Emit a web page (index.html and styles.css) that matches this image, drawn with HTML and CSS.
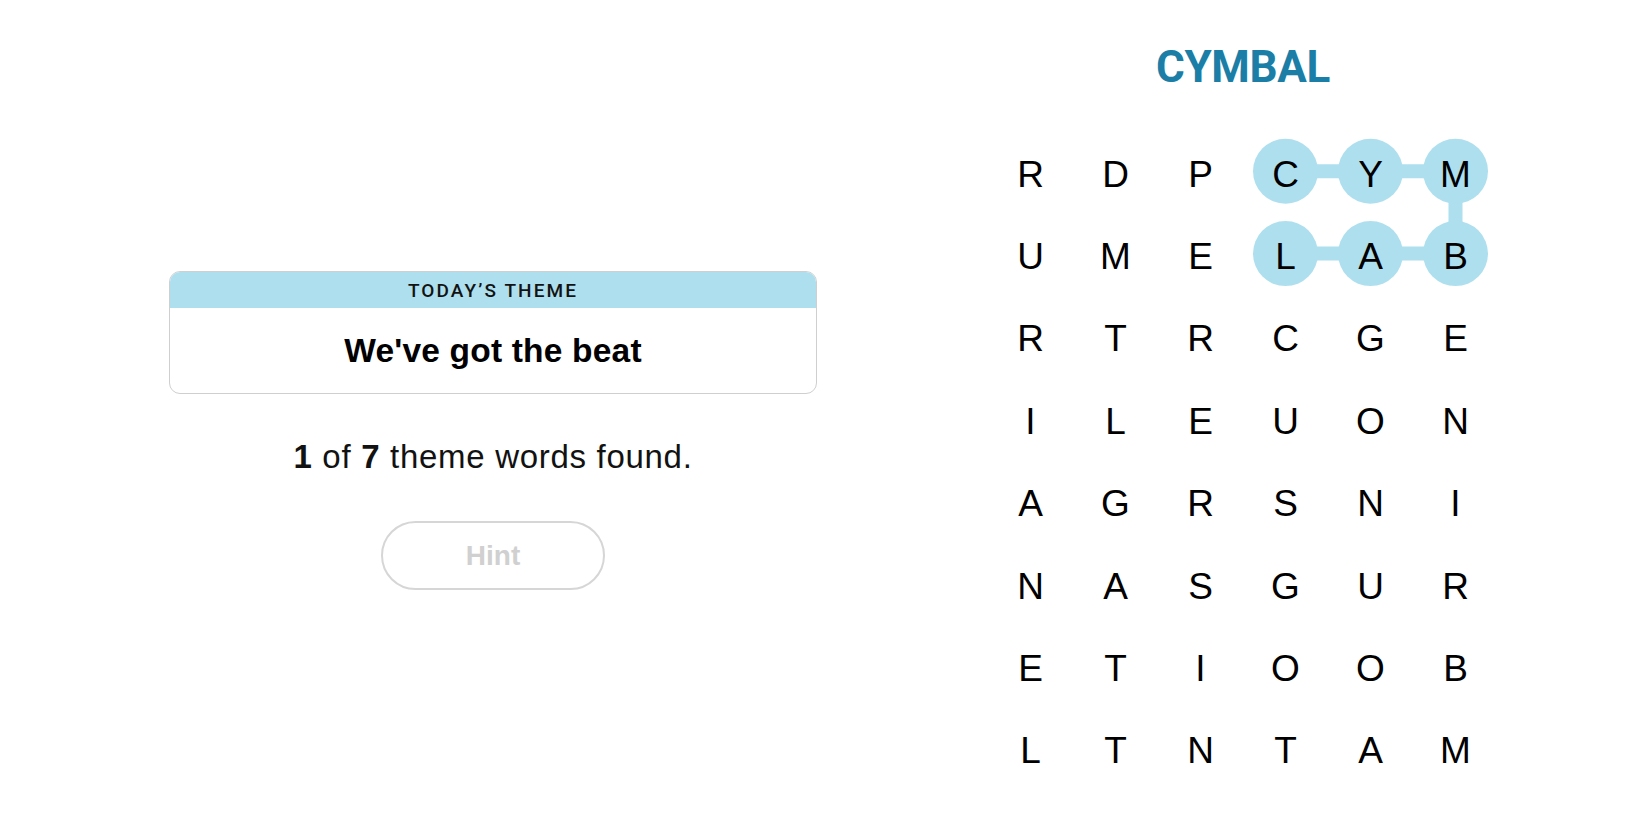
FILE: index.html
```html
<!DOCTYPE html>
<html lang="en">
<head>
<meta charset="utf-8">
<title>Strands</title>
<link rel="stylesheet" href="styles.css">
</head>
<body>
<main class="page">
  <section class="left">
    <div class="theme-card">
      <div class="theme-head">TODAY’S THEME</div>
      <div class="theme-body">We've got the beat</div>
    </div>
    <p class="progress"><b>1</b> of <b>7</b> theme words found.</p>
    <button class="hint" type="button">Hint</button>
  </section>
  <section class="right">
    <h1 class="word">CYMBAL</h1>
    <div class="board">
      <svg class="trail" width="510" height="660" viewBox="0 0 510 660" aria-hidden="true">
        <polyline points="297.5,41.2 382.5,41.2 467.5,41.2 467.5,123.6 382.5,123.6 297.5,123.6" fill="none" stroke="#aedfee" stroke-width="14" stroke-linejoin="round"/>
        <circle cx="297.5" cy="41.2" r="32.5" fill="#aedfee"/>
        <circle cx="382.5" cy="41.2" r="32.5" fill="#aedfee"/>
        <circle cx="467.5" cy="41.2" r="32.5" fill="#aedfee"/>
        <circle cx="297.5" cy="123.6" r="32.5" fill="#aedfee"/>
        <circle cx="382.5" cy="123.6" r="32.5" fill="#aedfee"/>
        <circle cx="467.5" cy="123.6" r="32.5" fill="#aedfee"/>
      </svg>
      <span class="cell">R</span><span class="cell">D</span><span class="cell">P</span><span class="cell">C</span><span class="cell">Y</span><span class="cell">M</span>
      <span class="cell">U</span><span class="cell">M</span><span class="cell">E</span><span class="cell">L</span><span class="cell">A</span><span class="cell">B</span>
      <span class="cell">R</span><span class="cell">T</span><span class="cell">R</span><span class="cell">C</span><span class="cell">G</span><span class="cell">E</span>
      <span class="cell">I</span><span class="cell">L</span><span class="cell">E</span><span class="cell">U</span><span class="cell">O</span><span class="cell">N</span>
      <span class="cell">A</span><span class="cell">G</span><span class="cell">R</span><span class="cell">S</span><span class="cell">N</span><span class="cell">I</span>
      <span class="cell">N</span><span class="cell">A</span><span class="cell">S</span><span class="cell">G</span><span class="cell">U</span><span class="cell">R</span>
      <span class="cell">E</span><span class="cell">T</span><span class="cell">I</span><span class="cell">O</span><span class="cell">O</span><span class="cell">B</span>
      <span class="cell">L</span><span class="cell">T</span><span class="cell">N</span><span class="cell">T</span><span class="cell">A</span><span class="cell">M</span>
    </div>
  </section>
</main>
</body>
</html>
```

FILE: styles.css
```css
html, body {
  margin: 0;
  padding: 0;
  background: #ffffff;
}

body {
  font-family: "Liberation Sans", Arial, sans-serif;
  color: #000000;
  width: 1650px;
  height: 825px;
  overflow: hidden;
}

.page {
  display: grid;
  grid-template-columns: 986px 514px;
  align-items: start;
}

.left {
  display: flex;
  flex-direction: column;
  align-items: center;
  padding-top: 271px;
}

.theme-card {
  width: 648px;
  box-sizing: border-box;
  border: 1px solid #cfcfcf;
  border-radius: 11px;
  overflow: hidden;
}

.theme-head {
  height: 36px;
  background: #aedfee;
  display: flex;
  align-items: center;
  justify-content: center;
  font-family: Roboto, "Liberation Sans", sans-serif;
  font-size: 19px;
  font-weight: 500;
  letter-spacing: 2.1px;
  color: #121212;
}

.theme-body {
  height: 85px;
  display: flex;
  align-items: center;
  justify-content: center;
  font-size: 33.5px;
  font-weight: 700;
  letter-spacing: 0.2px;
  color: #000;
  padding-top: 1px;
  box-sizing: border-box;
}

.progress {
  margin: 43px 0 0;
  font-size: 33px;
  line-height: 40px;
  letter-spacing: 0.7px;
  color: #121212;
}

.progress b {
  font-weight: 700;
}

.hint {
  margin-top: 44px;
  width: 224px;
  height: 69px;
  box-sizing: border-box;
  border: 2px solid #d6d6d6;
  border-radius: 35px;
  background: #ffffff;
  font-family: "Liberation Sans", Arial, sans-serif;
  font-size: 28px;
  font-weight: 700;
  color: #d0d0d0;
  padding: 0;
}

.right {
  display: flex;
  flex-direction: column;
  align-items: center;
  padding-top: 41px;
}

.word {
  margin: 0;
  height: 52px;
  line-height: 52px;
  font-family: Roboto, "Liberation Sans", sans-serif;
  font-size: 44px;
  font-weight: 700;
  letter-spacing: -0.3px;
  color: #1b7ea6;
}

.board {
  position: relative;
  margin-top: 37px;
  display: grid;
  grid-template-columns: repeat(6, 85px);
  grid-template-rows: repeat(8, 82.4px);
}

.trail {
  position: absolute;
  left: 0;
  top: 0;
  z-index: 0;
}

.cell {
  position: relative;
  z-index: 1;
  display: flex;
  align-items: center;
  justify-content: center;
  padding-top: 6px;
  box-sizing: border-box;
  font-size: 37px;
  line-height: 1;
  color: #000;
}
```
